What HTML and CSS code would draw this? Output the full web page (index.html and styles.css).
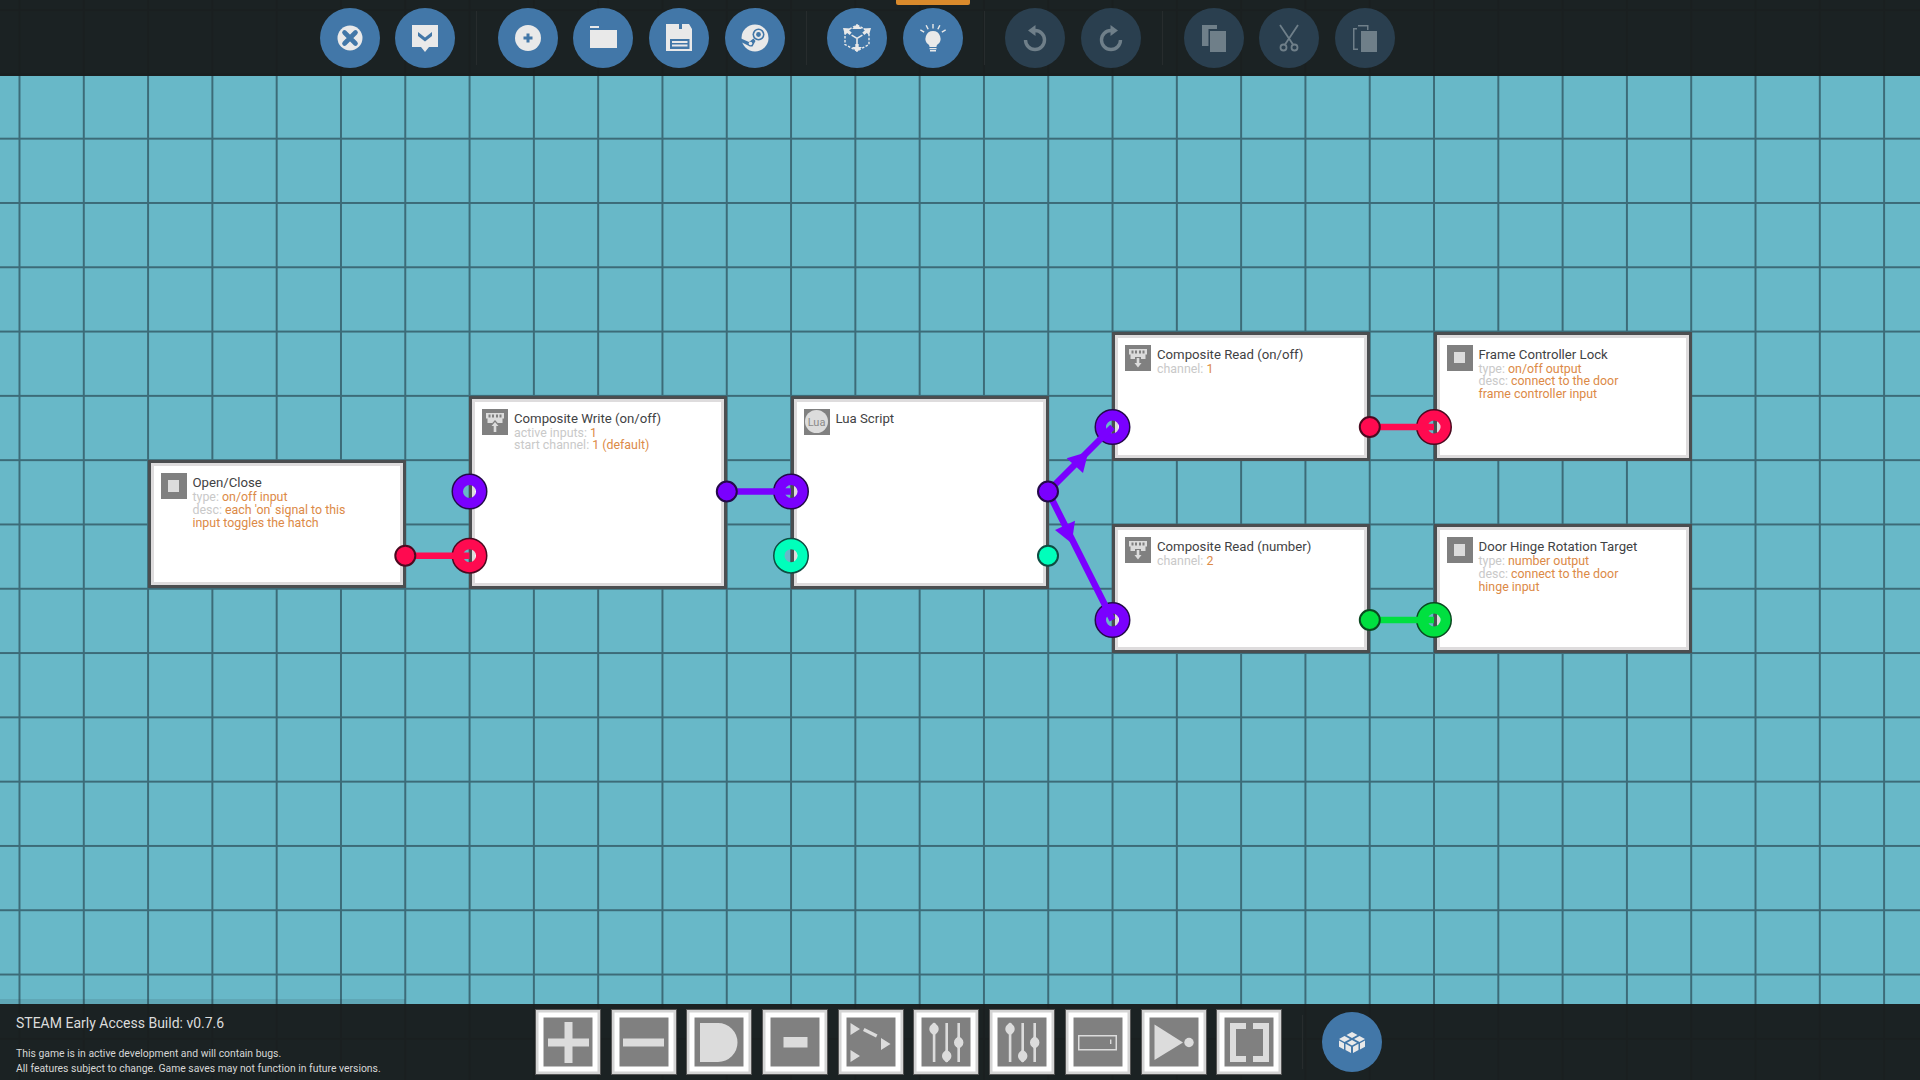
FILE: index.html
```html
<!DOCTYPE html>
<html lang="en">
<head>
  <meta charset="UTF-8">
  <title>Microcontroller Editor</title>
  <link rel="stylesheet" href="styles.css">
</head>
<body>
<div class="app">

  <!-- TOP TOOLBAR -->
  <header class="topbar">
    <div class="tool-group">
      <button class="round"><svg viewBox="0 0 28 28"><circle cx="14" cy="14" r="12.5"/><path class="cut-line" d="M8.500 8.500l11 11M19.500 8.500l-11 11"/></svg></button>
      <button class="round"><svg viewBox="0 0 28 28"><path d="M1 1h26v22h-9l-4 5-4-5H1z"/><path class="cut" d="M7 8l7 5.500L21 8v4l-7 5.500L7 12z"/></svg></button>
    </div>
    <div class="tool-group">
      <button class="round"><svg viewBox="0 0 28 28"><circle cx="14" cy="14" r="13"/><path class="cut" d="M12.500 9.500h3v3h3v3h-3v3h-3v-3h-3v-3h3z"/></svg></button>
      <button class="round"><svg viewBox="0 0 28 28"><path d="M1 2h9v2H1zM1 6h27v18H1z"/></svg></button>
      <button class="round"><svg viewBox="0 0 28 28"><path d="M1 0h23l3 5v22H1z"/><path class="cut" d="M14 0h3v5h-3zM5 15h19.500v10H5z"/><path d="M7 17h15.500v2H7zM7 20.500h15.500v2H7z"/></svg></button>
      <button class="round"><svg viewBox="0 0 28 28"><circle cx="14" cy="14" r="13.500"/><circle class="cut" cx="17.500" cy="10.500" r="6"/><circle cx="17.500" cy="10.500" r="4.400"/><circle class="cut" cx="17.500" cy="10.500" r="2.400"/><path class="cut" d="M0 14.500L8 18l4.500-3.500 2 2.500-3 5.500H9L0 18z"/><circle cx="9.500" cy="19.500" r="1.800"/></svg></button>
    </div>
    <div class="tool-group">
      <button class="round"><svg viewBox="0 0 28 28"><path class="dash" d="M14 1l12 6.500v13L14 27 2 20.500v-13z"/><path d="M14 0l5 5h-10zM14 28l-5-5h3.300V20h3.400v3H19zM0 4l8 .5-1.800 2 2.500 2-2 2.500-2.500-2L2 11zM28 4l-2 7-2.200-2-2.500 2-2-2.500 2.500-2-1.800-2zM13.200 15h1.600v5.500h-1.600zM9 10.500l5 3 5-3 .8 1.300-5.800 3.500-5.800-3.500z"/></svg></button>
      <button class="round"><svg viewBox="0 0 28 28"><path d="M14 7a7.500 7.500 0 0 1 4.500 13.500c-.8.7-1 1.500-1 2.500h-7c0-1-.2-1.800-1-2.500A7.500 7.500 0 0 1 14 7zM10.500 24h7v1.200h-7zM11 26h6v1.500h-6zM13.300 0h1.400v4.500h-1.400zM6.500 1.500l1.300-.6 2 4-1.300.6zM20.200.9l1.300.6-2 4-1.300-.6zM1 6.500l.7-1.200 3.800 2.200-.7 1.200zM27 6.500l-.7-1.200-3.800 2.200.7 1.200z"/></svg></button>
    </div>
    <div class="tool-group off">
      <button class="round"><svg viewBox="0 0 28 28"><path class="arc" d="M14 6.500A9.500 9.500 0 1 1 4.500 16"/><path d="M14.500 1v11L7 6.500z"/></svg></button>
      <button class="round"><svg viewBox="0 0 28 28"><path class="arc" d="M14 6.500A9.500 9.500 0 1 0 23.500 16"/><path d="M13.500 1v11L21 6.500z"/></svg></button>
    </div>
    <div class="tool-group off">
      <button class="round"><svg viewBox="0 0 28 28"><path d="M2 1h15v4H8.500v17H2zM10 7h16v21H10z"/></svg></button>
      <button class="round"><svg viewBox="0 0 28 28"><path class="stroke" d="M5 1l13 19.500M23 1L10 20.500"/><circle class="stroke" cx="8.500" cy="23.500" r="3"/><circle class="stroke" cx="19.500" cy="23.500" r="3"/></svg></button>
      <button class="round"><svg viewBox="0 0 28 28"><path d="M2 4h4v1.500H3.500v19H7V26H2zM7 1h10v1.500H7zM16 1h1.500v5H16zM10 7h16v21H10z"/></svg></button>
    </div>
    <div class="active-mark"></div>
  </header>

  <!-- GRAPH -->
  <main class="canvas">
    <div class="node n-open">
      <div class="node-icon"><span class="square"></span></div>
      <div class="node-text">
        <h2>Open/Close</h2>
        <p><i>type:</i> on/off input</p>
        <p><i>desc:</i> each 'on' signal to this</p>
        <p>input toggles the hatch</p>
      </div>
    </div>

    <div class="node n-write">
      <div class="node-icon">
        <svg viewBox="0 0 26 26"><path d="M4 4h18v5.500h-1.500V14H16l-3 3-3-3H5.500V9.500H4zM6.500 5.500v3h2v-3zM10 5.500v3h2v-3zM14 5.500v3h2v-3zM17.500 5.500v3h2v-3z"/><path class="glyph-back" d="M13 11l3.500 4H14.500v7h-3v-7H9.500z"/><path d="M13 13l3.500 4H14.300v6h-2.600v-6H9.500z"/></svg>
      </div>
      <div class="node-text">
        <h2>Composite Write (on/off)</h2>
        <p><i>active inputs:</i> 1</p>
        <p><i>start channel:</i> 1 (default)</p>
      </div>
    </div>

    <div class="node n-lua">
      <div class="node-icon"><span class="lua">Lua</span></div>
      <div class="node-text">
        <h2>Lua Script</h2>
      </div>
    </div>

    <div class="node n-read1">
      <div class="node-icon">
        <svg viewBox="0 0 26 26"><path d="M4 4h18v5.500h-1.500V14H16l-3 3-3-3H5.500V9.500H4zM6.500 5.500v3h2v-3zM10 5.500v3h2v-3zM14 5.500v3h2v-3zM17.500 5.500v3h2v-3z"/><path class="glyph-back" d="M10 12h6v5h2l-5 6-5-6h2z"/><path d="M11.700 13h2.600v5h2.200L13 22.500 9.500 18h2.200z"/></svg>
      </div>
      <div class="node-text">
        <h2>Composite Read (on/off)</h2>
        <p><i>channel:</i> 1</p>
      </div>
    </div>

    <div class="node n-frame">
      <div class="node-icon"><span class="square"></span></div>
      <div class="node-text">
        <h2>Frame Controller Lock</h2>
        <p><i>type:</i> on/off output</p>
        <p><i>desc:</i> connect to the door</p>
        <p>frame controller input</p>
      </div>
    </div>

    <div class="node n-read2">
      <div class="node-icon">
        <svg viewBox="0 0 26 26"><path d="M4 4h18v5.500h-1.500V14H16l-3 3-3-3H5.500V9.500H4zM6.500 5.500v3h2v-3zM10 5.500v3h2v-3zM14 5.500v3h2v-3zM17.500 5.500v3h2v-3z"/><path class="glyph-back" d="M10 12h6v5h2l-5 6-5-6h2z"/><path d="M11.700 13h2.600v5h2.200L13 22.500 9.500 18h2.200z"/></svg>
      </div>
      <div class="node-text">
        <h2>Composite Read (number)</h2>
        <p><i>channel:</i> 2</p>
      </div>
    </div>

    <div class="node n-hinge">
      <div class="node-icon"><span class="square"></span></div>
      <div class="node-text">
        <h2>Door Hinge Rotation Target</h2>
        <p><i>type:</i> number output</p>
        <p><i>desc:</i> connect to the door</p>
        <p>hinge input</p>
      </div>
    </div>

    <!-- ports and wires, coordinates are relative to the canvas (y - 76) -->
    <svg class="wires" viewBox="0 0 1920 928">
      <g class="red">
        <circle class="in-edge" cx="469.500" cy="479.700" r="14.500"/><circle class="in" cx="469.500" cy="479.700" r="11.500"/>
        <circle class="in-edge" cx="1434" cy="351" r="14.500"/><circle class="in" cx="1434" cy="351" r="11.500"/>
        <path class="wire" d="M405 479.700H469.500M1370 351H1434"/>
        <circle class="out" cx="405.300" cy="479.700" r="10"/>
        <circle class="out" cx="1369.800" cy="351" r="10"/>
      </g>
      <g class="purple">
        <circle class="in-edge" cx="469.500" cy="415.500" r="14.500"/><circle class="in" cx="469.500" cy="415.500" r="11.500"/>
        <circle class="in-edge" cx="791" cy="415.500" r="14.500"/><circle class="in" cx="791" cy="415.500" r="11.500"/>
        <circle class="in-edge" cx="1112.500" cy="351" r="14.500"/><circle class="in" cx="1112.500" cy="351" r="11.500"/>
        <circle class="in-edge" cx="1112.500" cy="544" r="14.500"/><circle class="in" cx="1112.500" cy="544" r="11.500"/>
        <path class="wire" d="M727 415.500H791M1048 415.500L1112.500 351M1048 415.500L1112.500 544"/>
        <path class="arrow" d="M1066.700 382.300L1083 397L1088.300 375.700Z"/>
        <path class="arrow" d="M1055 454L1075 444.700L1071.700 467.300Z"/>
        <circle class="out" cx="726.800" cy="415.500" r="10"/>
        <circle class="out" cx="1048" cy="415.500" r="10"/>
      </g>
      <g class="teal">
        <circle class="in-edge" cx="791" cy="479.700" r="14.500"/><circle class="in" cx="791" cy="479.700" r="11.500"/>
        <circle class="out" cx="1048" cy="479.700" r="10"/>
      </g>
      <g class="green">
        <circle class="in-edge" cx="1434" cy="544" r="14.500"/><circle class="in" cx="1434" cy="544" r="11.500"/>
        <path class="wire" d="M1370 544H1434"/>
        <circle class="out" cx="1369.800" cy="544" r="10"/>
      </g>
    </svg>
  </main>

  <!-- BOTTOM BAR -->
  <footer class="bottombar">
    <div class="build-info">
      <h1>STEAM Early Access Build: v0.7.6</h1>
      <p>This game is in active development and will contain bugs.<br>All features subject to change. Game saves may not function in future versions.</p>
    </div>
    <div class="gate-list">
      <button class="gate"><svg viewBox="0 0 49 49"><path d="M20.500 4h8v16.500H45v8H28.500V45h-8V28.500H4v-8h16.500z"/></svg></button>
      <button class="gate"><svg viewBox="0 0 49 49"><path d="M4 20.500h41v8H4z"/></svg></button>
      <button class="gate"><svg viewBox="0 0 49 49"><path d="M5 5h18a19.500 19.500 0 0 1 0 39H5z"/></svg></button>
      <button class="gate"><svg viewBox="0 0 49 49"><path d="M12.500 19h24v10.500h-24z"/></svg></button>
      <button class="gate"><svg viewBox="0 0 49 49"><path d="M4.500 5l9.500 6-9.500 6zM35 20l9.500 6-9.500 6zM4.500 32l9.500 6-9.500 6zM18.500 10l13 6.500-1.500 3-13-6.500z"/></svg></button>
      <button class="gate"><svg viewBox="0 0 49 49"><use href="#sliders"/></svg></button>
      <button class="gate"><svg viewBox="0 0 49 49"><use href="#sliders"/></svg></button>
      <button class="gate"><svg viewBox="0 0 49 49"><path fill-rule="evenodd" d="M5 17h39v15.500H5zM6.500 18.500v12.500h36V18.500zM37 21.500h1.400v4.500H37z"/></svg></button>
      <button class="gate"><svg viewBox="0 0 49 49"><path d="M5.500 6.500L34 24.500 5.500 42z"/><circle cx="40" cy="24.500" r="4.700"/></svg></button>
      <button class="gate"><svg viewBox="0 0 49 49"><path d="M5 5h16v6h-10v27h10v6H5zM44 5H28v6h10v27H28v6h16z"/></svg></button>
    </div>
    <div class="bar-sep"></div>
    <button class="round">
      <svg viewBox="0 0 28 28"><path d="M14 4l5.500 3-5.500 3-5.500-3zM6.500 8L12 11l-5.500 3L1 11zM21.500 8L27 11l-5.500 3L16 11zM14 12l5 2.800-5 2.800-5-2.800z"/><path d="M1 12.500l5 2.800v6.200l-5-2.800zM7.500 15.800l5.500 2.900V25l-5.500-2.900zM15 18.700l5.500-2.900v6.300L15 25zM22 15.300l5-2.800v6.200l-5 2.800z"/></svg>
    </button>
  </footer>

  <svg class="defs" width="0" height="0">
    <symbol id="sliders" viewBox="0 0 49 49">
      <path d="M10.800 5h2.600v39h-2.600zM23.400 5H26v39h-2.600zM35.400 5H38v39h-2.600z"/>
      <path d="M12 4.500l3 2.500a5.500 5.500 0 0 1 0 8l-3 2.500-3-2.500a5.500 5.500 0 0 1 0-8zM24.700 31.500l3 2.500a5.500 5.500 0 0 1 0 8l-3 2.500-3-2.500a5.500 5.500 0 0 1 0-8zM36.700 18l3 2.500a5.500 5.500 0 0 1 0 8l-3 2.500-3-2.500a5.500 5.500 0 0 1 0-8z"/>
    </symbol>
  </svg>
</div>
</body>
</html>
```

FILE: styles.css
```css
* {
  box-sizing: border-box;
}

body {
  margin: 0;
  font-family: Roboto, "Liberation Sans", sans-serif;
  background: #68b8c9;
  overflow: hidden;
}

.app {
  position: relative;
  width: 1920px;
  height: 1080px;
  display: flex;
  flex-direction: column;
  background-color: #68b8c8;
  background-image:
    linear-gradient(#3c6b78 2px, transparent 2px),
    linear-gradient(90deg, #3c6b78 2px, transparent 2px);
  background-size: 64.3px 64.3px;
  background-position: 18.5px 9.1px;
}

button {
  padding: 0;
  border: none;
  cursor: pointer;
}

/* toolbar */
.topbar {
  position: relative;
  height: 76px;
  flex: none;
  display: flex;
  align-items: center;
  padding: 0 0 0 319.5px;
  background: rgba(25, 29, 29, 0.97);
}

.tool-group {
  display: flex;
  gap: 15.7px;
  padding-right: 21px;
  margin-right: 20.5px;
  height: 54px;
  align-items: center;
  border-right: 1px solid #272c2d;
}

.tool-group:nth-child(5) {
  border-right: none;
}

.round {
  width: 60px;
  height: 60px;
  flex: none;
  border-radius: 50%;
  background: #4277a8;
  display: flex;
  align-items: center;
  justify-content: center;
}

.round svg {
  width: 28px;
  height: 28px;
  fill: #e9e9e9;
}

.round .cut {
  fill: #4277a8;
}

.round .cut-line {
  fill: none;
  stroke: #4277a8;
  stroke-width: 4.6;
  stroke-linecap: round;
}

.round .dash {
  fill: none;
  stroke: #e9e9e9;
  stroke-width: 1.4;
  stroke-dasharray: 2.5 1.5;
}

.off .round {
  background: #2a3f4f;
}

.off .round svg {
  fill: #6f7f89;
}

.round .stroke {
  fill: none;
  stroke: #6f7f89;
  stroke-width: 1.8;
}

.round .arc {
  fill: none;
  stroke: #6f7f89;
  stroke-width: 3.4;
}

.active-mark {
  position: absolute;
  left: 896px;
  top: 0;
  width: 74px;
  height: 4.5px;
  border-radius: 0 0 2px 2px;
  background: #d98a2c;
}

/* graph */
.canvas {
  position: relative;
  flex: 1;
}

.node {
  position: absolute;
  display: flex;
  gap: 6px;
  padding: 10px;
  width: 258px;
  background: #fff;
  border: 3px solid #4b4e50;
  box-shadow: inset 0 0 0 3px #dedcdd;
}

.n-open { left: 147.500px; top: 384px; height: 128px; }
.n-write { left: 469px; top: 319.500px; height: 193px; }
.n-lua { left: 790.500px; top: 319.500px; height: 193px; }
.n-read1 { left: 1112px; top: 255.500px; height: 129px; }
.n-frame { left: 1433.500px; top: 255.500px; height: 129px; }
.n-read2 { left: 1112px; top: 448px; height: 129px; }
.n-hinge { left: 1433.500px; top: 448px; height: 129px; }

.node-icon {
  width: 26px;
  height: 26px;
  flex: none;
  background: #808080;
  display: flex;
  align-items: center;
  justify-content: center;
}

.node-icon svg {
  width: 26px;
  height: 26px;
  fill: #dcdcdc;
}

.node-icon .glyph-back {
  fill: #808080;
}

.square {
  width: 11.500px;
  height: 11.500px;
  background: #dcdcdc;
}

.lua {
  width: 23px;
  height: 23px;
  border-radius: 50%;
  background: #dcdcdc;
  color: #8a8a8a;
  font-size: 11px;
  line-height: 25px;
  text-align: center;
}

.node-text {
  padding-top: 1px;
}

.node-text h2 {
  margin: 0;
  font-size: 13.200px;
  font-weight: 400;
  line-height: 17px;
  color: #3f4244;
  white-space: nowrap;
}

.node-text p {
  margin: 0;
  font-size: 12.400px;
  line-height: 12.900px;
  color: #dc8a47;
  white-space: nowrap;
}

.node-text i {
  font-style: normal;
  color: #c9c9c9;
}

/* wires */
.wires {
  position: absolute;
  left: 0;
  top: 0;
  width: 1920px;
  height: 928px;
  pointer-events: none;
}

.wire {
  fill: none;
  stroke-width: 6.5;
}

.in {
  fill: none;
  stroke-width: 10;
}

.in-edge {
  fill: none;
  stroke-width: 7;
}

.out {
  stroke-width: 2;
}

.red .in, .red .wire { stroke: #ff0a50; }
.red .in-edge, .red .out { stroke: #4b0a20; }
.red .out { fill: #ff0a50; }

.purple .in, .purple .wire { stroke: #7a00ff; }
.purple .in-edge, .purple .out { stroke: #240a4a; }
.purple .out { fill: #7a00ff; }
.purple .arrow { fill: #7a00ff; }

.teal .in { stroke: #00ffbb; }
.teal .in-edge, .teal .out { stroke: #0e4d42; }
.teal .out { fill: #00ffbb; }

.green .in, .green .wire { stroke: #00e040; }
.green .in-edge, .green .out { stroke: #0a4a20; }
.green .out { fill: #00e040; }

/* bottom bar */
.bottombar {
  position: relative;
  height: 76px;
  flex: none;
  display: flex;
  align-items: center;
  background: rgba(25, 29, 29, 0.97);
}

.bottombar::before {
  content: "";
  position: absolute;
  left: 0;
  top: -5px;
  width: 405px;
  height: 5px;
  background: rgba(30, 50, 60, 0.12);
}

.build-info {
  width: 535px;
  flex: none;
  padding-left: 16px;
  color: #dcdcdc;
  align-self: flex-start;
}

.build-info h1 {
  margin: 10px 0 0;
  font-size: 14px;
  font-weight: 400;
  line-height: 18px;
}

.build-info p {
  margin: 14px 0 0;
  font-size: 10.400px;
  line-height: 15px;
  color: #d6d6d6;
}

.gate-list {
  display: flex;
  gap: 9.700px;
}

.gate {
  width: 66px;
  height: 66px;
  flex: none;
  background: #808080;
  border: 1.500px solid #565656;
  box-shadow: inset 0 0 0 2.500px #d4d4d4, inset 0 0 0 7.500px #fff;
  display: flex;
  align-items: center;
  justify-content: center;
}

.gate svg {
  width: 49px;
  height: 49px;
  fill: #dcdcdc;
}

.bar-sep {
  width: 1px;
  height: 54px;
  margin: 0 19px 0 19.500px;
  background: #272c2d;
}

.defs {
  position: absolute;
}
```
